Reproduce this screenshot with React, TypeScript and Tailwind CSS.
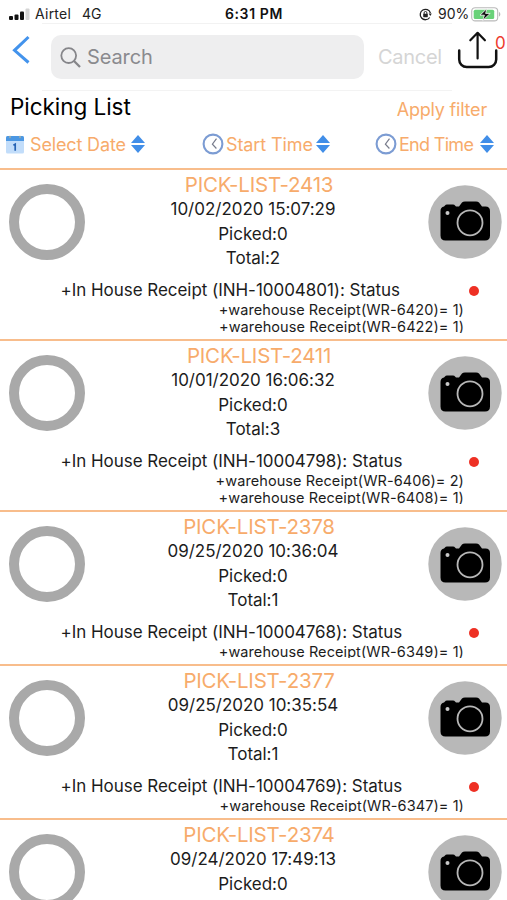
import { useState } from 'react';

interface PickList {
  id: string;
  date: string;
  picked: number;
  total: number;
  receipt: string;
  items: string[];
}

const pickLists: PickList[] = [
  { id: '2413', date: '10/02/2020 15:07:29', picked: 0, total: 2, receipt: 'INH-10004801', items: ['(WR-6420)= 1)', '(WR-6422)= 1)'] },
  { id: '2411', date: '10/01/2020 16:06:32', picked: 0, total: 3, receipt: 'INH-10004798', items: ['(WR-6406)= 2)', '(WR-6408)= 1)'] },
  { id: '2378', date: '09/25/2020 10:36:04', picked: 0, total: 1, receipt: 'INH-10004768', items: ['(WR-6349)= 1)'] },
  { id: '2377', date: '09/25/2020 10:35:54', picked: 0, total: 1, receipt: 'INH-10004769', items: ['(WR-6347)= 1)'] },
  { id: '2374', date: '09/24/2020 17:49:13', picked: 0, total: 1, receipt: 'INH-10004765', items: ['(WR-6340)= 1)'] },
];

function StatusBar() {
  return (
    <div className="flex h-[23px] items-center pt-[5px] pl-[9px] pr-[6px] text-[14px] leading-[18px] text-[#222]">
      <svg className="h-[13px] w-[21px] shrink-0" viewBox="0 0 21 13">
        <rect x="0" y="8" width="4" height="4" rx="1" fill="#111" />
        <rect x="5.5" y="6.5" width="4" height="5.5" rx="1" fill="#111" />
        <rect x="11" y="3.5" width="4" height="8.5" rx="1" fill="#111" />
        <rect x="16.5" y="0.5" width="4" height="11.5" rx="1" fill="#d4d4d4" />
      </svg>
      <span className="ml-[5px] w-[47px] whitespace-nowrap tracking-[0.25px]">Airtel</span>
      <span className="w-[143px]">4G</span>
      <span className="whitespace-nowrap text-[14px] font-semibold tracking-[0.6px] text-[#111]">6:31 PM</span>
      <div className="ml-auto flex items-center">
        <svg className="h-[13px] w-[13px]" viewBox="0 0 13 13" fill="none" stroke="#222" strokeWidth="1.3">
          <path d="M10.7 9.5A5.2 5.2 0 1 1 11.4 5" />
          <path d="M9.7 5.5h3.1l-1.5 2.4z" fill="#222" stroke="none" />
          <rect x="4.2" y="5.7" width="4.6" height="3.5" rx=".6" fill="#222" stroke="none" />
          <path d="M5.1 6V4.9a1.4 1.4 0 0 1 2.8 0V6" strokeWidth="1" />
        </svg>
        <span className="ml-[6px] w-[33px] text-[14px]">90%</span>
        <svg className="h-[15px] w-[30px]" viewBox="0 0 30 15">
          <rect x=".7" y=".7" width="26" height="13.2" rx="3.5" fill="#fff" stroke="#b9b9b9" strokeWidth="1.1" />
          <rect x="2.7" y="2.7" width="20.5" height="9.3" rx="1.6" fill="#69d279" />
          <path d="M28 5v4.6c1.8-.7 1.8-3.9 0-4.6z" fill="#b9b9b9" />
          <path d="M16 1.5 9 8.2h4.4L11.7 13.5l7.5-7.1h-4.6z" fill="#111" stroke="#fff" strokeWidth=".8" />
        </svg>
      </div>
    </div>
  );
}

function SearchHeader() {
  const [query, setQuery] = useState('');

  return (
    <div className="flex h-[68px]">
      <button className="w-[42px] shrink-0 pl-[12px]" aria-label="Back">
        <svg className="-mt-[14px] h-[30px] w-[19px]" viewBox="0 0 19 30" fill="none" stroke="#4393ec" strokeWidth="3">
          <path d="M16.5 2 2.5 15.3l14 12.2" />
        </svg>
      </button>
      <div className="flex h-full w-[410px] items-center border-t border-b border-t-[#f2f2f2] border-b-[#f3f3f3] pl-[9px]">
        <label className="flex h-[44px] w-[313px] shrink-0 items-center rounded-[10px] bg-[#eeeeef] pl-[9px]">
          <svg className="h-[21px] w-[21px] shrink-0" viewBox="0 0 21 21" fill="none" stroke="#858589" strokeWidth="1.8">
            <circle cx="8.7" cy="8.6" r="7.4" />
            <path d="m14 14 6 6" strokeWidth="2.3" />
          </svg>
          <input
            value={query}
            onChange={(e) => setQuery(e.target.value)}
            placeholder="Search"
            className="ml-[6px] w-[240px] bg-transparent text-[20px] tracking-[-0.1px] outline-none placeholder:text-[#8a8a8e]"
          />
        </label>
        <button className="ml-[14px] text-[20px] tracking-[-0.3px] text-[#d5d5d5]">Cancel</button>
      </div>
      <div className="relative w-[55px]">
        <svg className="mt-[7px] ml-[5px] h-[40px] w-[42px]" viewBox="0 0 42 40" fill="none" stroke="#111" strokeWidth="2.2" strokeLinecap="round" strokeLinejoin="round">
          <path d="M2.2 20.5v9a7.5 7.5 0 0 0 7.5 7.5h22a7.5 7.5 0 0 0 7.5-7.5v-9" strokeWidth="2.5" />
          <path d="M20.6 28.5V3M13.3 10.3l7.3-7.5 7.3 7.5" />
        </svg>
        <span className="absolute top-[9px] left-[43px] text-[17px] leading-[22px] text-[#ee3b2f]">0</span>
      </div>
    </div>
  );
}

function CalendarIcon() {
  return (
    <svg className="h-[19px] w-[18px] shrink-0" viewBox="0 0 18 19">
      <rect y="1" width="18" height="17.5" rx="1.5" fill="#c2ddfa" />
      <path d="M0 6V2.5Q0 1 1.5 1h15Q18 1 18 2.5V6z" fill="#4b97e3" />
      <circle cx="4" cy="2" r="1.2" fill="#8ea9b5" />
      <circle cx="14" cy="2" r="1.2" fill="#8ea9b5" />
      <path d="m7.4 10.2 1.8-1v6.6" fill="none" stroke="#2663b4" strokeWidth="1.7" />
    </svg>
  );
}

function ClockIcon() {
  return (
    <svg className="h-[22px] w-[22px] shrink-0" viewBox="0 0 22 22" fill="none">
      <circle cx="11" cy="11" r="9.4" stroke="#7c9cd3" strokeWidth="2.1" />
      <path d="M14.5 5.6 10.4 11.2l4 4.3" stroke="#777b8b" strokeWidth="1.2" />
    </svg>
  );
}

function SortIcon() {
  return (
    <svg className="h-[18px] w-[14px] shrink-0" viewBox="0 0 14 18" fill="#418ee8">
      <path d="M7 0l7 8H0zM7 18l7-8H0z" />
    </svg>
  );
}

function Filters() {
  return (
    <div className="h-[77px] pt-[3px] text-[#f7ab6b]">
      <div className="flex h-[26px] items-center justify-between pr-[20px] pl-[10px]">
        <h1 className="text-[22.5px] tracking-[-0.05px] text-black">Picking List</h1>
        <button className="pt-[5px] text-[18px] tracking-[-0.2px]">Apply filter</button>
      </div>
      <div className="mt-[13px] flex h-[22px] items-center text-[18px] whitespace-nowrap">
        <button className="flex w-[202px] items-center pl-[6px]">
          <CalendarIcon />
          <span className="ml-[6px] w-[101px] text-left tracking-[-0.15px]">Select Date</span>
          <SortIcon />
        </button>
        <button className="flex w-[173px] items-center">
          <ClockIcon />
          <span className="ml-[2px] w-[90px] text-left tracking-[-0.1px]">Start Time</span>
          <SortIcon />
        </button>
        <button className="flex items-center">
          <ClockIcon />
          <span className="ml-[2px] w-[81px] text-left tracking-[-0.7px]">End Time</span>
          <SortIcon />
        </button>
      </div>
    </div>
  );
}

function CameraIcon() {
  return (
    <svg className="h-[74px] w-[74px]" viewBox="0 0 74 74">
      <circle cx="37" cy="37" r="36.7" fill="#b8b8b8" />
      <path
        d="M12.5 26q0-4 3.500-4.500l1-1q.5-1 2-1h6q1.500 0 2 1l1 1h3l3-4q1-1 3-1h11q2 0 3 1l3 4h3.500q4.500 0 4.500 4.500V50.500q0 5-5 5H17.500q-5 0-5-5z"
        fill="#000"
      />
      <circle cx="42" cy="37.8" r="12.5" fill="none" stroke="#b8b8b8" strokeWidth="1.8" />
      <circle cx="19.5" cy="27.9" r="2" fill="#c8c8c8" />
    </svg>
  );
}

function PickListRow({ item }: { item: PickList }) {
  return (
    <li className={`shrink-0 overflow-hidden border-t-2 border-[#f8bd8c] ${item.items.length > 1 ? 'h-[171px]' : 'h-[154px]'}`}>
      <div className="flex h-[109px] items-start pl-[9px]">
        <button className="mt-[14px] h-[76px] w-[76px] shrink-0 rounded-full border-[10px] border-[#a9a9a9]" aria-label="Select" />
        <div className="w-[343px] pt-[3px] text-center text-[17px] leading-[24.4px] tracking-[-0.02px] text-[#1c1c1c]">
          <p className="pl-[5px] text-[20.5px] leading-[24.4px] tracking-[-0.2px] text-[#f7ab6b]">PICK-LIST-{item.id}</p>
          <div className="pr-[7px]">
            <p>{item.date}</p>
            <p>Picked:{item.picked}</p>
            <p>Total:{item.total}</p>
          </div>
        </div>
        <div className="mt-[15px]">
          <CameraIcon />
        </div>
      </div>
      <div className="flex h-[23px] items-center justify-between pr-[28px] pl-[60.5px] text-[17px] tracking-[-0.04px] text-[#1c1c1c]">
        <span>+In House Receipt ({item.receipt}): Status</span>
        <span className="mt-[1px] h-[10px] w-[10px] rounded-full bg-[#ee3024]" />
      </div>
      <div className={`overflow-hidden pr-[43px] text-right text-[14.5px] tracking-[0.08px] text-[#1c1c1c] ${item.items.length > 1 ? 'h-[31px]' : 'h-[14px]'}`}>
        {item.items.map((line) => (
          <p key={line} className="-mt-px mb-px leading-[17px]">+warehouse Receipt{line}</p>
        ))}
      </div>
    </li>
  );
}

export default function App() {
  return (
    <div className="flex h-[900px] w-[507px] flex-col overflow-hidden bg-white font-['Inter',sans-serif]">
      <StatusBar />
      <SearchHeader />
      <Filters />
      <ul className="flex min-h-0 flex-1 flex-col overflow-hidden">
        {pickLists.map((item) => (
          <PickListRow key={item.id} item={item} />
        ))}
      </ul>
    </div>
  );
}
